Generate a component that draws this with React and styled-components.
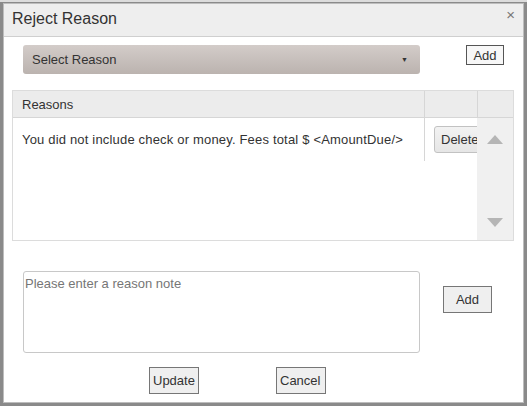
import React from 'react';
import styled, { createGlobalStyle } from 'styled-components';

const GlobalStyle = createGlobalStyle`
  html, body {
    margin: 0;
    padding: 0;
    background: #8a8a8a;
  }
  body {
    font-family: "Liberation Sans", Arial, sans-serif;
    font-size: 13px;
    color: #333;
  }
`;

const Backdrop = styled.div`
  width: 527px;
  height: 406px;
  box-sizing: border-box;
  padding: 3px 3px 3px 3px;
  background: linear-gradient(#dcdcdc 0, #dcdcdc 2px, #8a8a8a 2px);
`;

const Modal = styled.div`
  width: 521px;
  height: 400px;
  box-sizing: border-box;
  background: #fff;
  border: 1px solid #bdbdbd;
  display: flex;
  flex-direction: column;
`;

const Header = styled.div`
  height: 33px;
  flex: none;
  box-sizing: border-box;
  background: #eeeeee;
  border-bottom: 1px solid #cfcfcf;
  display: flex;
  align-items: center;
  justify-content: space-between;
  padding: 0 8px 3px 8px;
`;

const Title = styled.h4`
  margin: 0;
  font-size: 16px;
  font-weight: normal;
  color: #333;
`;

const Close = styled.span`
  font-size: 15px;
  color: #777;
  line-height: 1;
  margin-top: -9px;
`;

const TopRow = styled.div`
  display: flex;
  align-items: flex-start;
  gap: 46px;
  padding: 8px 0 0 19px;
`;

const SelectBox = styled.div`
  width: 397px;
  height: 29px;
  box-sizing: border-box;
  border-radius: 3px;
  background: linear-gradient(#d3ccc9, #bbb3af);
  display: flex;
  align-items: center;
  justify-content: space-between;
  padding: 0 12px 0 9px;
  color: #333;
`;

const Caret = styled.span`
  font-size: 7px;
  color: #333;
`;

const PlainButton = styled.button`
  font-family: "Liberation Sans", Arial, sans-serif;
  font-size: 13px;
  color: #333;
  background: ${p => (p.$light ? '#f7f7f7' : '#efefef')};
  border: 1px solid ${p => (p.$light ? '#555' : '#767676')};
  width: ${p => p.$w}px;
  height: ${p => p.$h}px;
  padding: 0;
  box-sizing: border-box;
  cursor: pointer;
  white-space: nowrap;
  overflow: hidden;
  text-align: ${p => (p.$left ? 'left' : 'center')};
  padding-left: ${p => (p.$left ? '3px' : '0')};
`;

const Table = styled.div`
  margin: 16px 0 0 8px;
  width: 502px;
  height: 151px;
  box-sizing: border-box;
  border: 1px solid #dcdcdc;
  display: grid;
  grid-template-columns: 411px 53px 36px;
  grid-template-rows: 27px 1fr;
`;

const HeadCell = styled.div`
  background: #ececec;
  border-bottom: 1px solid #d6d6d6;
  border-left: ${p => (p.$first ? 'none' : '1px solid #d6d6d6')};
  display: flex;
  align-items: center;
  padding-left: 9px;
`;

const Body = styled.div`
  grid-column: 1 / 3;
  overflow: hidden;
`;

const Row = styled.div`
  display: grid;
  grid-template-columns: 411px 53px;
  height: 43px;
`;

const ReasonCell = styled.div`
  display: flex;
  align-items: center;
  padding-left: 9px;
  letter-spacing: 0.18px;
  white-space: nowrap;
  border-left: 1px solid #cfcfcf;
  margin-left: -1px;
`;

const ActionCell = styled.div`
  border-left: 1px solid #d6d6d6;
  display: flex;
  align-items: center;
  padding-left: 9px;
  overflow: hidden;
`;

const DeleteButton = styled.button`
  font-family: "Liberation Sans", Arial, sans-serif;
  font-size: 13px;
  color: #333;
  flex: none;
  width: 56px;
  height: 27px;
  padding: 0 0 0 6px;
  text-align: left;
  background: linear-gradient(#f2f2f2, #e6e6e6);
  border: 1px solid #c2c2c2;
  border-radius: 3px;
`;

const ScrollTrack = styled.div`
  background: #f0f0f0;
  display: flex;
  flex-direction: column;
  justify-content: space-between;
  align-items: center;
  padding: 17px 0 13px 0;
`;

const NoteRow = styled.div`
  display: flex;
  align-items: flex-start;
  gap: 23px;
  padding: 30px 0 0 19px;
`;

const NoteArea = styled.textarea`
  width: 397px;
  height: 82px;
  box-sizing: border-box;
  border: 1px solid #c8c8c8;
  border-radius: 3px;
  resize: none;
  padding: 4px 1px;
  font-family: "Liberation Sans", Arial, sans-serif;
  font-size: 13px;
  color: #333;
  &::placeholder {
    color: #767676;
  }
`;

const AddSide = styled.div`
  padding-top: 15px;
`;

const Footer = styled.div`
  display: flex;
  gap: 77px;
  padding: 14px 0 0 145px;
`;

const Arrow = ({ up }) => (
  <svg width="16" height="9" viewBox="0 0 16 9">
    <polygon points={up ? '0,9 8,0 16,9' : '0,0 16,0 8,9'} fill="#b5b5b5" />
  </svg>
);

const App = () => (
  <>
    <GlobalStyle />
    <Backdrop>
      <Modal>
        <Header>
          <Title>Reject Reason</Title>
          <Close>×</Close>
        </Header>
        <TopRow>
          <SelectBox>
            <span>Select Reason</span>
            <Caret>▼</Caret>
          </SelectBox>
          <PlainButton $light $w={38} $h={20}>Add</PlainButton>
        </TopRow>
        <Table>
          <HeadCell $first>Reasons</HeadCell>
          <HeadCell />
          <HeadCell />
          <Body>
            <Row>
              <ReasonCell>You did not include check or money. Fees total $ &lt;AmountDue/&gt;</ReasonCell>
              <ActionCell>
                <DeleteButton>Delete</DeleteButton>
              </ActionCell>
            </Row>
          </Body>
          <ScrollTrack>
            <Arrow up />
            <Arrow />
          </ScrollTrack>
        </Table>
        <NoteRow>
          <NoteArea placeholder="Please enter a reason note" />
          <AddSide>
            <PlainButton $w={49} $h={27}>Add</PlainButton>
          </AddSide>
        </NoteRow>
        <Footer>
          <PlainButton $w={50} $h={27} $left>Update</PlainButton>
          <PlainButton $w={50} $h={27} $left>Cancel</PlainButton>
        </Footer>
      </Modal>
    </Backdrop>
  </>
);

export default App;
